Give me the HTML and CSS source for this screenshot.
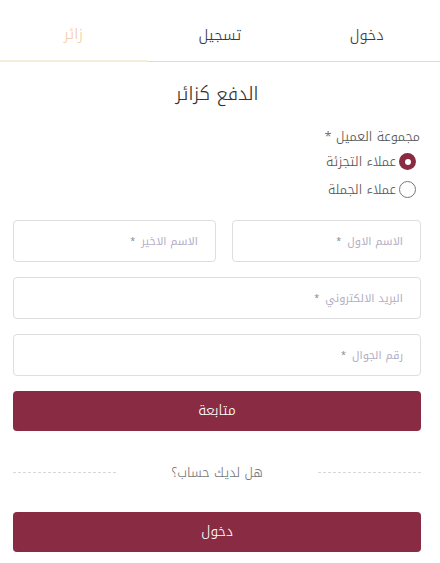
FILE: index.html
```html
<!DOCTYPE html>
<html lang="ar" dir="rtl">
<head>
<meta charset="utf-8">
<title>الدفع كزائر</title>
<link rel="stylesheet" href="styles.css">
</head>
<body>
<div class="tabs">
  <div class="tab">دخول</div>
  <div class="tab">تسجيل</div>
  <div class="tab active">زائر</div>
</div>
<div class="page">
  <h1 class="title">الدفع كزائر</h1>
  <div class="group-label">مجموعة العميل *</div>
  <div class="radio-row"><span class="radio checked"></span><span>عملاء التجزئة</span></div>
  <div class="radio-row"><span class="radio"></span><span>عملاء الجملة</span></div>
  <div class="name-row">
    <div class="field">الاسم الاول <span class="star">*</span></div>
    <div class="field">الاسم الاخير <span class="star">*</span></div>
  </div>
  <div class="field">البريد الالكتروني <span class="star">*</span></div>
  <div class="field">رقم الجوال <span class="star">*</span></div>
  <button class="btn">متابعة</button>
  <div class="divider"><span class="line"></span><span class="divider-text">هل لديك حساب؟</span><span class="line"></span></div>
  <button class="btn">دخول</button>
</div>
</body>
</html>
```
FILE: styles.css
```css
* { box-sizing: border-box; }
body {
  margin: 0;
  background: #fff;
  font-family: "Noto Kufi Arabic", "DejaVu Sans", sans-serif;
  font-weight: 300;
  color: #333;
}
.tabs {
  display: flex;
  height: 62px;
  border-bottom: 1px solid #dcdcdc;
}
.tab {
  flex: 1;
  display: flex;
  align-items: center;
  justify-content: center;
  padding-top: 8px;
  font-size: 15px;
  line-height: 20px;
  color: #3a3a3a;
}
.tab.active {
  color: #f1cda8;
  border-bottom: 2px solid #f4eed8;
  margin-bottom: -1px;
}
.page {
  padding: 0 19px 0 13px;
}
.title {
  margin: 17px 0 0;
  height: 33px;
  line-height: 30px;
  text-align: center;
  font-size: 18.5px;
  font-weight: 300;
  color: #333;
}
.group-label {
  margin-top: 15px;
  font-size: 13px;
  line-height: 20px;
  color: #555;
  height: 20px;
  padding-right: 1px;
}
.radio-row {
  display: flex;
  align-items: center;
  gap: 3px;
  height: 28px;
  padding-top: 1px;
  font-size: 13px;
  color: #555;
}
.radio {
  width: 17px;
  height: 17px;
  border: 1px solid #777;
  border-radius: 50%;
  margin-right: 5px;
}
.radio.checked {
  border: none;
  background: #8a2b42;
  display: flex;
  align-items: center;
  justify-content: center;
}
.radio.checked::after {
  content: "";
  width: 6px;
  height: 6px;
  border-radius: 50%;
  background: #fff;
}
.name-row {
  display: grid;
  grid-template-columns: 189px 203px;
  gap: 16px;
  margin-top: 17px;
}
.field {
  height: 42px;
  border: 1px solid #dedede;
  border-radius: 4px;
  display: flex;
  align-items: center;
  padding-right: 17px;
  font-size: 11px;
  font-weight: 400;
  color: #b4aec4;
  margin-bottom: 15px;
}
.star {
  color: #8a8a8a;
  font-size: 9px;
  margin-right: 6px;
}
.btn {
  display: block;
  width: 100%;
  height: 40px;
  border: none;
  border-radius: 4px;
  background: #892b42;
  color: #fff;
  font-family: inherit;
  font-weight: 300;
  font-size: 14px;
  padding-bottom: 2px;
}
.divider {
  display: flex;
  align-items: center;
  height: 40px;
  margin: 21px 0 20px;
}
.line {
  flex: 0 0 103px;
  border-top: 1px dashed #d8d8d8;
}
.divider-text {
  flex: 1;
  text-align: center;
  font-size: 13px;
  color: #777;
}
```
